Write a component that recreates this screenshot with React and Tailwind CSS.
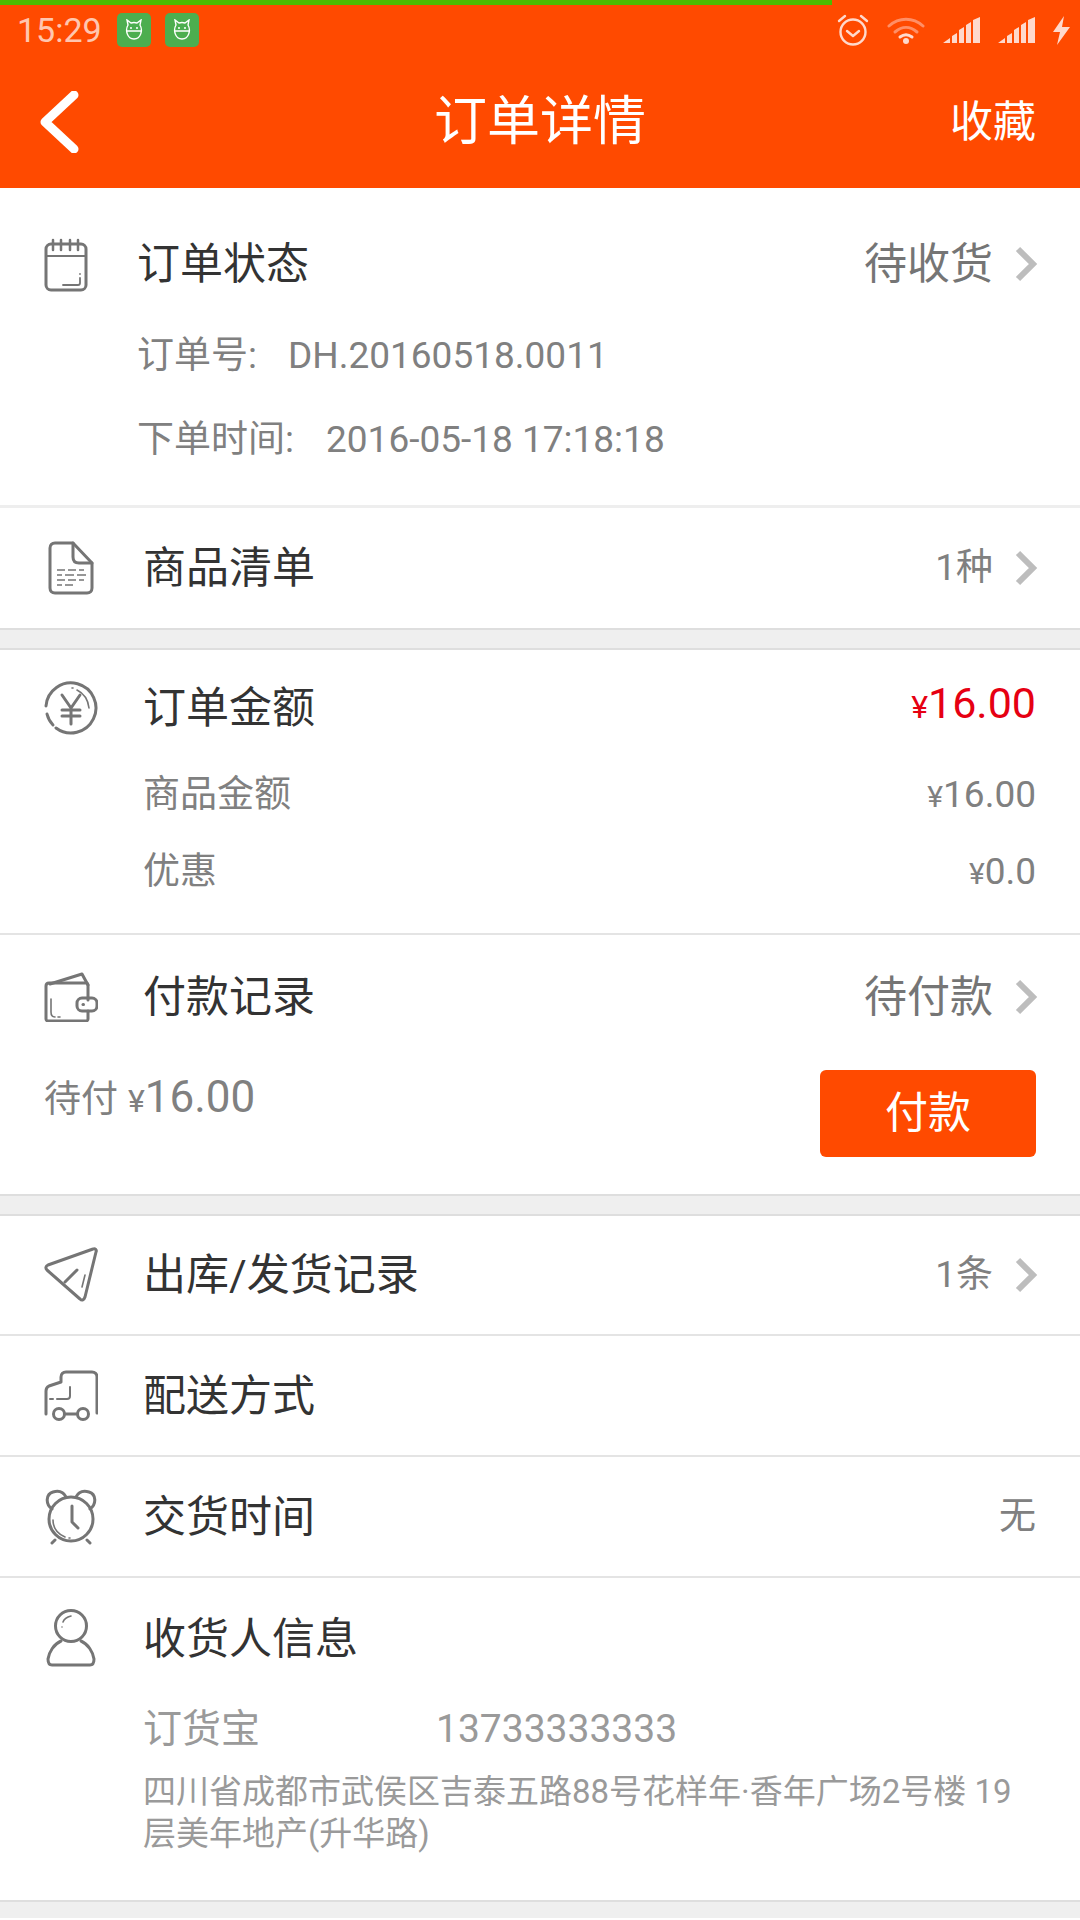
import React from 'react';

const G = '#757575';

const Svg = ({ w = 54, h = 54, children, className = '' }) => (
  <svg width={w} height={h} viewBox={`0 0 ${w} ${h}`} fill="none" stroke={G} strokeWidth="3" strokeLinecap="round" strokeLinejoin="round" className={`shrink-0 ${className}`}>
    {children}
  </svg>
);

const CalendarIcon = () => (
  <Svg w={44} h={54}>
    <rect x="2" y="6" width="40" height="46" rx="5" />
    <path d="M2 18h40" strokeWidth="2" />
    <path d="M9 2v10M17 2v10M26 2v10M34 2v10" strokeWidth="2.5" />
    <path d="M19 47h15c2 0 2-1 2-2v-5M36 36v0" strokeWidth="1.8" />
  </Svg>
);

const DocIcon = () => (
  <Svg w={46} h={54}>
    <path d="M7 2h18l19 20v25c0 3-2 5-5 5H7c-3 0-5-2-5-5V7c0-3 2-5 5-5z" />
    <path d="M25 2v14c0 4 2 6 6 6h13" />
    <path d="M9 29h8M13 29h0M20 29h8M31 29h5M9 34h5M17 34h9M29 34h9M9 39h8M20 39h8M31 39h5M9 44h5M17 44h8" strokeWidth="1.6" strokeLinecap="butt" />
  </Svg>
);

const YenIcon = () => (
  <Svg>
    <path d="M2 25A25 25 0 1 1 12 47" />
    <path d="M3 33c1 4 3 8 6 11" />
    <path d="M18 14l9 13 9-13M27 27v16M18 29h18M18 35h18" />
    <path d="M33 9c6 3 11 9 12 18" strokeWidth="1.6" />
    <path d="M28 7h1" strokeWidth="1.6" />
  </Svg>
);

const WalletIcon = () => (
  <Svg h={50}>
    <path d="M6 12l32-10 6 11" />
    <path d="M44 28V13c0-1-1-2-2-2H5c-2 0-3 1-3 3v33c0 1 1 2 2 2h38c1 0 2-1 2-2V39" />
    <rect x="33" y="26" width="20" height="13" rx="5" />
    <path d="M39 32.5h.5" />
    <path d="M7 27v13c0 3 1 5 4 5M14 45h2" strokeWidth="1.6" />
  </Svg>
);

const PlaneIcon = () => (
  <Svg h={56}>
    <path d="M4 18L49 2c2-1 4 1 3 3L41 50c-1 3-3 4-5 2L3 23c-2-2-1-4 1-5z" />
    <path d="M21 35l12-12" />
    <path d="M38 40l3-12" strokeWidth="1.6" />
  </Svg>
);

const TruckIcon = () => (
  <Svg h={52}>
    <path d="M2 44V21c0-3 1-4 3-5l12-4V7c0-3 2-5 5-5h26c3 0 5 2 5 5v36" />
    <path d="M6 29h3M13 29h10c2 0 3-1 3-3v-9" strokeWidth="2" />
    <circle cx="15" cy="44" r="5.5" />
    <circle cx="39" cy="44" r="5.5" />
    <path d="M21 44h12" />
  </Svg>
);

const ClockIcon = () => (
  <Svg w={52} h={56}>
    <circle cx="26" cy="30" r="22" />
    <path d="M7 20C0 15 1 5 8 3s11 1 13 5M45 20c7-5 6-15-1-17s-11 1-13 5" />
    <path d="M27 17v16l6 6" />
    <path d="M10 51l-3 3M42 51l3 3" />
    <path d="M8 31c0 8 5 14 12 17M24 49h1" strokeWidth="1.6" />
  </Svg>
);

const PersonIcon = () => (
  <Svg w={50} h={62}>
    <circle cx="25" cy="18" r="15.5" />
    <path d="M17 14c1-3 4-5 8-6M16 19v0" strokeWidth="1.6" />
    <path d="M15 33C8 36 3 44 2 51c0 4 1 6 4 6h38c3 0 4-2 4-6-1-7-6-15-13-18" />
  </Svg>
);

const Chevron = () => (
  <svg width="24" height="36" viewBox="0 0 24 36" fill="none" stroke="#bdbdbd" strokeWidth="6" className="shrink-0 ml-[21px] -mr-[2px]">
    <path d="M4 3l15 15L4 33" />
  </svg>
);

const Signal = () => (
  <svg width="38" height="26" viewBox="0 0 38 26" fill="#ffd9cc">
    <path d="M0 26l7-5v5zM9 26v-7l5-3v10zM16 26V13l5-3v16zM23 26V8l5-3v21zM30 26V3l7-3v26z" />
  </svg>
);

const AppBadge = () => (
  <div className="w-[34px] h-[34px] rounded-[5px] bg-[#4cae4f] flex items-center justify-center">
    <svg width="20" height="22" viewBox="0 0 20 22" fill="none" stroke="#fff" strokeWidth="1.4">
      <path d="M4 6L3 1l4 3c2-.6 4-.6 6 0l4-3-1 5c3 5 1 14-6 14S1 11 4 6zM2 12h16" />
      <circle cx="7" cy="9" r=".4" />
      <circle cx="13" cy="9" r=".4" />
    </svg>
  </div>
);

const StatusBar = () => (
  <div className="h-[60px] flex items-center pl-[17px] pr-[10px]">
    <span className="text-[34px] leading-[60px] text-white/70">15:29</span>
    <div className="ml-[15px] flex gap-[14px]">
      <AppBadge />
      <AppBadge />
    </div>
    <div className="ml-auto flex items-center">
      <svg width="32" height="32" viewBox="0 0 32 32" fill="none" stroke="#ffd9cc" strokeWidth="2.4" strokeLinecap="round" strokeLinejoin="round">
        <circle cx="16" cy="18" r="12.5" />
        <path d="M10 17l6 5 6-5M2 7l6-5M30 7l-6-5" />
      </svg>
      <svg width="38" height="27" viewBox="0 0 38 27" fill="none" strokeLinecap="round" className="ml-[18px]">
        <path d="M2 9c10-9 24-9 34 0" stroke="#ff8f66" strokeWidth="3" />
        <path d="M8 15c7-6 15-6 22 0" stroke="#ff8f66" strokeWidth="3" />
        <path d="M13 20c4-3 8-3 12 0" stroke="#ffd9cc" strokeWidth="3" />
        <circle cx="19" cy="24" r="3" fill="#ffd9cc" />
      </svg>
      <div className="ml-[18px]"><Signal /></div>
      <div className="ml-[17px]"><Signal /></div>
      <svg width="17" height="29" viewBox="0 0 17 29" fill="#ffd9cc" className="ml-[17px]">
        <path d="M11 0L0 16h7L4 29l13-18H9z" />
      </svg>
    </div>
  </div>
);

const Row = ({ icon, title, children, h = 'h-[120px]', border = true }) => (
  <div className={`${h} flex items-center pl-[44px] pr-[44px] ${border ? 'border-b-2 border-[#e4e4e4]' : ''}`}>
    <div className="w-[54px] flex justify-center">{icon}</div>
    <span className="ml-[45px] text-[43px] leading-[50px] text-[#333333]">{title}</span>
    <div className="ml-auto flex items-center">{children}</div>
  </div>
);

const Gap = () => <div className="h-[20px] bg-[#efefef] border-b-2 border-[#dedede]" />;

export default function App() {
  return (
    <div className="relative w-[1080px] h-[1920px] overflow-hidden bg-white font-['Roboto','Noto_Sans_CJK_SC',sans-serif]">
      <div className="absolute left-0 top-0 h-[5px] w-[832px] bg-[#4cbb00]" />

      <header className="h-[188px] bg-[#ff4a00] text-white flex flex-col">
        <StatusBar />
        <div className="flex-1 relative flex items-center justify-between pl-[40px] pr-[44px] pb-[4px]">
          <svg width="40" height="62" viewBox="0 0 40 62" fill="none" stroke="#fff" strokeWidth="9" strokeLinecap="round" strokeLinejoin="round">
            <path d="M34 4L5 31l29 27" />
          </svg>
          <span className="absolute left-0 right-0 text-center text-[53px] leading-[60px]">订单详情</span>
          <span className="text-[43px] leading-[50px]">收藏</span>
        </div>
      </header>

      <section className="pl-[44px] pr-[44px] pt-[48px] pb-[43px] border-b-[3px] border-[#eeeeee]">
        <div className="flex items-center h-[56px]">
          <div className="mt-[2px]"><CalendarIcon /></div>
          <span className="ml-[49px] text-[43px] leading-[50px] text-[#333333]">订单状态</span>
          <span className="ml-auto text-[43px] leading-[50px] text-[#757575]">待收货</span>
          <Chevron />
        </div>
        <div className="ml-[93px] mt-[42px] text-[37px] leading-[44px] text-[#808080] flex">
          <span className="w-[151px]">订单号:</span>
          <span>DH.20160518.0011</span>
        </div>
        <div className="ml-[93px] mt-[40px] text-[37px] leading-[44px] text-[#808080] flex">
          <span className="w-[189px]">下单时间:</span>
          <span>2016-05-18 17:18:18</span>
        </div>
      </section>

      <Row icon={<DocIcon />} title="商品清单" border={false}>
        <span className="text-[37px] text-[#808080]">1种</span>
        <Chevron />
      </Row>
      <div className="border-t-2 border-[#dedede]"><Gap /></div>

      <section className="h-[285px] border-b-2 border-[#e4e4e4] pl-[44px] pr-[44px] pt-[30px]">
        <div className="flex items-center h-[56px]">
          <YenIcon />
          <span className="ml-[45px] text-[43px] leading-[50px] text-[#333333]">订单金额</span>
          <span className="ml-auto text-[#e60012] leading-[50px]"><span className="text-[32px]">¥</span><span className="text-[43px]">16.00</span></span>
        </div>
        <div className="ml-[99px] mt-[37px] flex justify-between text-[37px] leading-[44px] text-[#808080]">
          <span>商品金额</span>
          <span><span className="text-[30px]">¥</span>16.00</span>
        </div>
        <div className="ml-[99px] mt-[31px] flex justify-between text-[37px] leading-[44px] text-[#808080]">
          <span>优惠</span>
          <span><span className="text-[30px]">¥</span>0.0</span>
        </div>
      </section>

      <section className="h-[259px] pl-[44px] pr-[44px] pt-[34px]">
        <div className="flex items-center h-[56px]">
          <WalletIcon />
          <span className="ml-[45px] text-[43px] leading-[50px] text-[#333333]">付款记录</span>
          <span className="ml-auto text-[43px] leading-[50px] text-[#757575]">待付款</span>
          <Chevron />
        </div>
        <div className="mt-[45px] flex justify-between items-start">
          <div className="mt-[2px] flex text-[#808080] items-baseline">
            <span className="text-[37px] leading-[50px]">待付</span>
            <span className="ml-[10px] text-[32px] leading-[50px]">¥</span>
            <span className="text-[44px] leading-[50px]">16.00</span>
          </div>
          <button className="w-[216px] h-[87px] rounded-[6px] bg-[#ff4a00] text-white text-[43px]">付款</button>
        </div>
      </section>
      <div className="border-t-2 border-[#dedede]"><Gap /></div>

      <Row icon={<PlaneIcon />} title="出库/发货记录">
        <span className="text-[37px] text-[#808080]">1条</span>
        <Chevron />
      </Row>
      <Row icon={<TruckIcon />} title="配送方式" h="h-[121px]" />
      <Row icon={<ClockIcon />} title="交货时间" h="h-[121px]">
        <span className="text-[37px] text-[#808080]">无</span>
      </Row>

      <section className="h-[324px] border-b-2 border-[#dedede] pl-[44px] pr-[44px] pt-[30px]">
        <div className="flex items-center h-[62px]">
          <div className="w-[54px] flex justify-center"><PersonIcon /></div>
          <span className="ml-[45px] text-[43px] leading-[50px] text-[#333333]">收货人信息</span>
        </div>
        <div className="ml-[99px] mt-[36px] flex text-[39px] leading-[46px] text-[#9a9a9a]">
          <span className="w-[293px]">订货宝</span>
          <span>13733333333</span>
        </div>
        <p className="ml-[99px] mt-[19px] text-[33px] leading-[42px] text-[#9a9a9a]">四川省成都市武侯区吉泰五路88号花样年·香年广场2号楼 19层美年地产(升华路)</p>
      </section>
      <div className="h-[16px] bg-[#efefef]" />
    </div>
  );
}
